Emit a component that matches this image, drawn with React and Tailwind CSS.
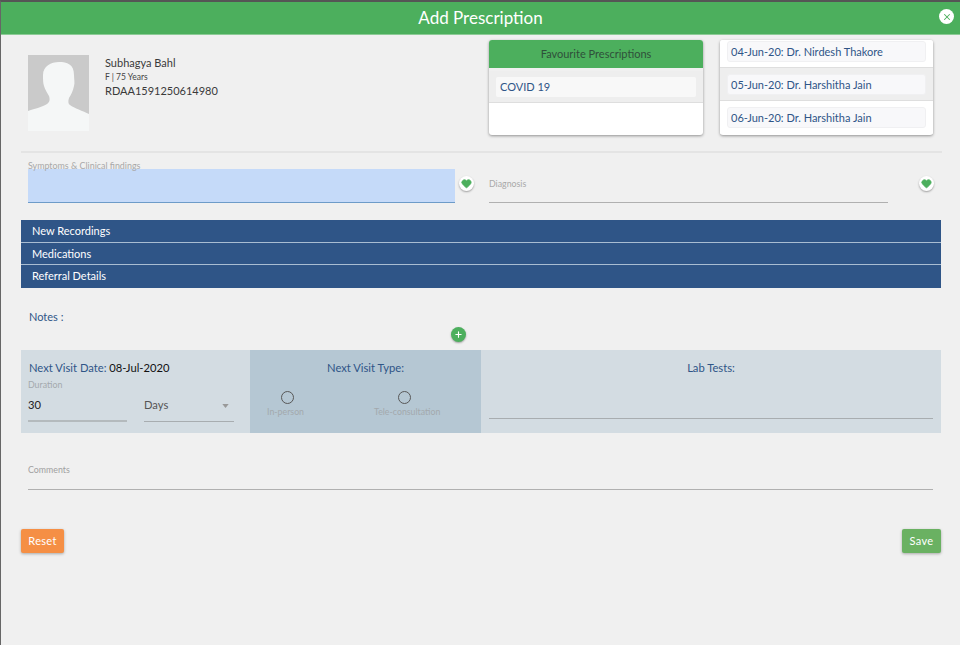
import { Heart, Plus, X } from "lucide-react";

function HeartButton() {
  return (
    <div className="w-[15px] h-[15px] rounded-full bg-white shadow-[0_1px_2px_rgba(0,0,0,0.35)] flex items-center justify-center shrink-0">
      <Heart className="w-[11px] h-[11px] text-[#4caf5d] fill-[#4caf5d]" strokeWidth={2} />
    </div>
  );
}

function Radio({ label, className, dotClass }) {
  return (
    <div className={`flex flex-col items-center ${className}`}>
      <div className={`w-[13px] h-[13px] rounded-full border-[1.75px] border-[#585858] ${dotClass}`} />
      <div className="text-[8.8px] leading-[12px] mt-[2px] text-[#a3a9ad]">{label}</div>
    </div>
  );
}

export default function App() {
  const history = [
    "04-Jun-20: Dr. Nirdesh Thakore",
    "05-Jun-20: Dr. Harshitha Jain",
    "06-Jun-20: Dr. Harshitha Jain",
  ];

  return (
    <div className="w-[960px] h-[645px] overflow-hidden bg-[#f0f0f0] border-l border-[#666] border-t-2 border-t-[#555] font-['Lato',sans-serif] text-[#333]">
      {/* Header */}
      <div className="h-[33px] bg-[#4caf5d] border-b border-[#8ccb96] flex items-center justify-center relative">
        <h1 className="text-[17px] text-white">Add Prescription</h1>
        <div className="absolute right-[6px] top-[7px] w-[15px] h-[15px] rounded-full bg-white flex items-center justify-center">
          <X className="w-[10px] h-[10px] text-[#4caf5d]" strokeWidth={2.5} />
        </div>
      </div>

      <div className="pl-[20px] pr-[18px]">
        {/* Patient + cards */}
        <div className="flex h-[118px] border-b-2 border-[#e4e4e4]">
          <div className="w-[468px] flex pl-[7px] pt-[20px]">
            <svg viewBox="0 0 61 76" className="w-[61px] h-[76px] shrink-0">
              <rect width="61" height="76" fill="#cacaca" />
              <path
                d="M31 7c8 0 15 2 15 13 0 4 1 8 0 11-1 5-3 9-5 12-1 3-1 6 1 7 4 3 13 6 19 9v17H0V56c5-2 15-4 19-7 3-2 3-5 2-8-2-3-4-7-5-10-1-3-1-6-1-11 0-9 8-13 16-13z"
                fill="#f5f7f7"
              />
            </svg>
            <div className="ml-[16px] pt-[1px]">
              <div className="text-[11px] leading-[14px] text-[#3a3a3a]">Subhagya Bahl</div>
              <div className="text-[8.5px] leading-[14px] text-[#444]">F | 75 Years</div>
              <div className="text-[11px] leading-[14px] text-[#3a3a3a]">RDAA1591250614980</div>
            </div>
          </div>

          <div className="w-[214px] h-[95px] mt-[5px] rounded-[3px] bg-white shadow-[0_1px_3px_rgba(0,0,0,0.4)] overflow-hidden">
            <div className="h-[28px] bg-[#4caf5d] flex items-center justify-center text-[11px] text-[#2f4f3a]">
              Favourite Prescriptions
            </div>
            <div className="h-[35px] bg-[#eeeeee] border-b border-[#dedede] pt-[6px] px-[7px] border-t-[3px] border-t-[#f0f0f0]">
              <div className="h-[20px] bg-[#f8f8f8] rounded-[2px] px-[4px] text-[11px] leading-[20px] text-[#2f5587]">
                COVID 19
              </div>
            </div>
          </div>

          <div className="w-[213px] h-[95px] mt-[5px] ml-[17px] rounded-[3px] bg-white shadow-[0_1px_3px_rgba(0,0,0,0.4)] overflow-hidden">
            {history.map((item, i) => (
              <div
                key={item}
                className={`px-[7px] flex border-b border-[#dedede] last:border-b-0 ${i === 0 ? "h-[28px] items-start pt-[1px]" : "h-[33px] items-center"} ${i === 1 ? "bg-[#eeeeee]" : "bg-white"}`}
              >
                <div className="w-full h-[21px] bg-[#f8f8fa] border border-[#f0f0f2] rounded-[3px] px-[3px] text-[11px] leading-[20px] text-[#2f5587]">
                  {item}
                </div>
              </div>
            ))}
          </div>
        </div>

        {/* Symptoms + diagnosis */}
        <div className="flex mt-[7px] h-[43px]">
          <div className="w-[427px] ml-[7px] shrink-0 relative">
            <div className="absolute left-0 top-[1px] text-[8.9px] leading-[10px] text-[#a8a8a8]">
              Symptoms &amp; Clinical findings
            </div>
            <div className="mt-[9px] h-[34px] bg-[#c5daf9] border-b border-[#6d9bc8]" />
          </div>
          <div className="ml-[4px] mt-[16px]">
            <HeartButton />
          </div>
          <div className="w-[399px] ml-[15px] shrink-0 h-[43px] border-b border-[#b0b0b0] pt-[19px] text-[8.8px] leading-[10px] text-[#a8a8a8]">
            Diagnosis
          </div>
          <div className="ml-[31px] mt-[16px]">
            <HeartButton />
          </div>
        </div>

        {/* Accordion */}
        <div className="mt-[17px] w-[920px]">
          {["New Recordings", "Medications", "Referral Details"].map((item) => (
            <div
              key={item}
              className="h-[22.7px] bg-[#2f5587] border-b border-[#a9bdd2] last:border-b-0 px-[11px] text-[11px] leading-[22px] text-white"
            >
              {item}
            </div>
          ))}
        </div>

        {/* Notes */}
        <div className="pl-[8px] pt-[22px] h-[62px] w-[920px] relative text-[11px] leading-[14px] text-[#2f5587]">
          Notes :
          <div className="absolute left-[430px] top-[39px] w-[15px] h-[15px] rounded-full bg-[#4caf5d] shadow-[0_1px_2px_rgba(0,0,0,0.35)] flex items-center justify-center">
            <Plus className="w-[9px] h-[9px] text-white" strokeWidth={3} />
          </div>
        </div>

        {/* Next visit */}
        <div className="flex w-[920px] h-[83px]">
          <div className="w-[229px] bg-[#d3dce2] pl-[7px] pr-[16px] pt-[11px]">
            <div className="pl-[1px] text-[11.2px] leading-[14px]">
              <span className="text-[#2f5587]">Next Visit Date: </span>
              <span className="text-[#111]">08-Jul-2020</span>
            </div>
            <div className="text-[8.8px] leading-[10px] mt-[5px] text-[#a3a9ad]">Duration</div>
            <div className="flex mt-[5px]">
              <div className="w-[99px] h-[27px] border-b-2 border-[#b4babd] text-[11.2px] leading-[20px] text-[#222]">
                30
              </div>
              <div className="w-[90px] ml-[17px] h-[27px] border-b border-[#a8adb0] flex justify-between pr-[4px] text-[11.2px] leading-[20px] text-[#555]">
                Days
                <svg viewBox="0 0 8 5" className="w-[7px] h-[4px] mt-[9px] mr-[1px] fill-[#999]">
                  <path d="M0 0h8L4 5z" />
                </svg>
              </div>
            </div>
          </div>

          <div className="w-[231px] bg-[#b5c7d3] pt-[11px]">
            <div className="text-center text-[11.2px] leading-[14px] text-[#2f5587]">Next Visit Type:</div>
            <div className="flex mt-[16px]">
              <Radio label="In-person" className="ml-[17px]" dotClass="ml-[3px]" />
              <Radio label="Tele-consultation" className="ml-[70px]" dotClass="-ml-[5px]" />
            </div>
          </div>

          <div className="w-[460px] bg-[#d3dce2] px-[8px] pt-[11px]">
            <div className="text-center text-[11.2px] leading-[14px] text-[#2f5587]">Lab Tests:</div>
            <div className="mt-[43px] border-b border-[#a8adb0]" />
          </div>
        </div>

        {/* Comments */}
        <div className="w-[905px] ml-[7px] mt-[32px] h-[25px] border-b border-[#b0b0b0] text-[8.8px] leading-[10px] text-[#a0a0a0]">
          Comments
        </div>

        {/* Actions */}
        <div className="flex justify-between w-[920px] mt-[39px]">
          <button className="w-[43px] h-[24px] rounded-[2px] bg-[#f58f45] text-white text-[11px] tracking-[0.3px] shadow-[0_1px_3px_rgba(0,0,0,0.3)]">
            Reset
          </button>
          <button className="w-[39px] h-[24px] rounded-[2px] bg-[#6ab162] text-white text-[11px] tracking-[0.3px] shadow-[0_1px_3px_rgba(0,0,0,0.3)]">
            Save
          </button>
        </div>
      </div>
    </div>
  );
}
